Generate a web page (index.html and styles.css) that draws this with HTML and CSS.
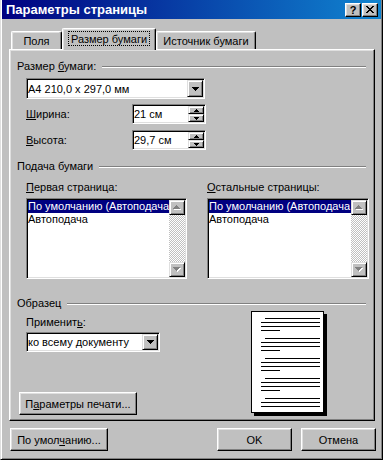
FILE: index.html
```html
<!DOCTYPE html>
<html lang="ru">
<head>
    <meta charset="UTF-8">
    <title>Параметры страницы</title>
    <link rel="stylesheet" href="styles.css">
</head>
<body>
    <div class="window">
        <div class="titlebar">
            <span class="title">Параметры страницы</span>
            <div class="caption-buttons">
                <span class="cap-btn">?</span>
                <span class="cap-btn">
                    <svg width="8" height="7" viewBox="0 0 8 7"><path d="M0 0h2v1H0zM6 0h2v1H6zM1 1h2v1H1zM5 1h2v1H5zM2 2h4v1H2zM3 3h2v1H3zM2 4h4v1H2zM1 5h2v1H1zM5 5h2v1H5zM0 6h2v1H0zM6 6h2v1H6z"/></svg>
                </span>
            </div>
        </div>

        <div class="client">
            <div class="tabs">
                <div class="tab tab-fields">Поля</div>
                <div class="tab tab-size active"><span class="focus">Размер бумаги</span></div>
                <div class="tab tab-source">Источник бумаги</div>
            </div>

            <div class="panel">
                <div class="group-title"><span>Размер <u>б</u>умаги:</span></div>
                <div class="combo combo-size">
                    <span class="combo-value">A4 210,0 x 297,0 мм</span>
                    <span class="drop-btn"><svg width="7" height="4" viewBox="0 0 7 4"><path d="M0 0h7v1H0zM1 1h5v1H1zM2 2h3v1H2zM3 3h1v1H3z"/></svg></span>
                </div>
                <div class="field-row first">
                    <span class="field-label"><u>Ш</u>ирина:</span>
                    <div class="spin">
                        <span class="spin-value">21 см</span>
                        <span class="spin-btns">
                            <span class="spin-btn"><svg width="5" height="3" viewBox="0 0 5 3"><path d="M2 0h1v1H2zM1 1h3v1H1zM0 2h5v1H0z"/></svg></span>
                            <span class="spin-btn"><svg width="5" height="3" viewBox="0 0 5 3"><path d="M0 0h5v1H0zM1 1h3v1H1zM2 2h1v1H2z"/></svg></span>
                        </span>
                    </div>
                </div>
                <div class="field-row">
                    <span class="field-label"><u>В</u>ысота:</span>
                    <div class="spin">
                        <span class="spin-value">29,7 см</span>
                        <span class="spin-btns">
                            <span class="spin-btn"><svg width="5" height="3" viewBox="0 0 5 3"><path d="M2 0h1v1H2zM1 1h3v1H1zM0 2h5v1H0z"/></svg></span>
                            <span class="spin-btn"><svg width="5" height="3" viewBox="0 0 5 3"><path d="M0 0h5v1H0zM1 1h3v1H1zM2 2h1v1H2z"/></svg></span>
                        </span>
                    </div>
                </div>

                <div class="group-title group-feed"><span>Подача бумаги</span></div>
                <div class="trays">
                    <div class="tray tray-first">
                        <span class="tray-label"><u>П</u>ервая страница:</span>
                        <div class="listbox">
                            <ul class="items">
                                <li class="selected">По умолчанию (Автоподача</li>
                                <li>Автоподача</li>
                            </ul>
                            <div class="scrollbar">
                                <span class="scroll-btn"><svg width="8" height="5" viewBox="0 0 8 5"><path fill="#fff" d="M4 1h1v1H4zM3 2h3v1H3zM2 3h5v1H2zM1 4h7v1H1z"/><path fill="#808080" d="M3 0h1v1H3zM2 1h3v1H2zM1 2h5v1H1zM0 3h7v1H0z"/></svg></span>
                                <span class="scroll-track"></span>
                                <span class="scroll-btn"><svg width="8" height="5" viewBox="0 0 8 5"><path fill="#fff" d="M1 1h7v1H1zM2 2h5v1H2zM3 3h3v1H3zM4 4h1v1H4z"/><path fill="#808080" d="M0 0h7v1H0zM1 1h5v1H1zM2 2h3v1H2zM3 3h1v1H3z"/></svg></span>
                            </div>
                        </div>
                    </div>
                    <div class="tray tray-rest">
                        <span class="tray-label"><u>О</u>стальные страницы:</span>
                        <div class="listbox">
                            <ul class="items">
                                <li class="selected">По умолчанию (Автоподача</li>
                                <li>Автоподача</li>
                            </ul>
                            <div class="scrollbar">
                                <span class="scroll-btn"><svg width="8" height="5" viewBox="0 0 8 5"><path fill="#fff" d="M4 1h1v1H4zM3 2h3v1H3zM2 3h5v1H2zM1 4h7v1H1z"/><path fill="#808080" d="M3 0h1v1H3zM2 1h3v1H2zM1 2h5v1H1zM0 3h7v1H0z"/></svg></span>
                                <span class="scroll-track"></span>
                                <span class="scroll-btn"><svg width="8" height="5" viewBox="0 0 8 5"><path fill="#fff" d="M1 1h7v1H1zM2 2h5v1H2zM3 3h3v1H3zM4 4h1v1H4z"/><path fill="#808080" d="M0 0h7v1H0zM1 1h5v1H1zM2 2h3v1H2zM3 3h1v1H3z"/></svg></span>
                            </div>
                        </div>
                    </div>
                </div>

                <div class="group-title group-sample"><span>Образец</span></div>
                <div class="sample">
                    <div class="sample-left">
                        <span class="apply-label">Применит<u>ь</u>:</span>
                        <div class="combo combo-apply">
                            <span class="combo-value">ко всему документу</span>
                            <span class="drop-btn"><svg width="7" height="4" viewBox="0 0 7 4"><path d="M0 0h7v1H0zM1 1h5v1H1zM2 2h3v1H2zM3 3h1v1H3z"/></svg></span>
                        </div>
                        <button class="btn btn-print">П<u>а</u>раметры печати...</button>
                    </div>
                    <div class="page-preview">
                        <div class="para"><i class="ln indent"></i><i class="ln"></i><i class="ln"></i><i class="ln short"></i></div>
                        <div class="para"><i class="ln indent"></i><i class="ln"></i><i class="ln"></i><i class="ln short"></i></div>
                        <div class="para"><i class="ln indent"></i><i class="ln"></i><i class="ln"></i><i class="ln short"></i></div>
                        <div class="para"><i class="ln indent"></i><i class="ln"></i><i class="ln"></i><i class="ln short"></i></div>
                        <div class="para"><i class="ln indent"></i><i class="ln"></i><i class="ln"></i></div>
                    </div>
                </div>
            </div>

            <div class="footer">
                <button class="btn btn-default">По умол<u>ч</u>анию...</button>
                <button class="btn btn-ok">OK</button>
                <button class="btn btn-cancel">Отмена</button>
            </div>
        </div>
    </div>
</body>
</html>
```

FILE: styles.css
```css
* {
    box-sizing: border-box;
    margin: 0;
    padding: 0;
}
body {
    background: #c0c0c0;
    font-family: "Liberation Sans", Arial, sans-serif;
    font-size: 11px;
    color: #000;
}
u {
    text-decoration: underline;
    text-underline-offset: 1px;
}

/* window frame */
.window {
    width: 383px;
    height: 460px;
    background: #c0c0c0;
    border: 1px solid;
    border-color: #dfdfdf #000 #000 #dfdfdf;
    border-top: 0;
    box-shadow: inset 1px 0 #fff, inset -1px -1px #808080;
    padding: 0 1px 1px 1px;
}
.titlebar {
    height: 19px;
    display: flex;
    align-items: center;
    justify-content: space-between;
    padding: 0 3px 0 4px;
    background: linear-gradient(to right, #000080, #1084d0);
    color: #fff;
    font-size: 13px;
    font-weight: bold;
}
.caption-buttons {
    display: flex;
    gap: 1px;
}
.cap-btn {
    width: 16px;
    height: 14px;
    display: flex;
    align-items: center;
    justify-content: center;
    background: #c0c0c0;
    color: #000;
    font-size: 11px;
    font-weight: bold;
    border: 1px solid;
    border-color: #fff #000 #000 #fff;
    box-shadow: inset -1px -1px #808080, inset 1px 1px #dfdfdf;
}

/* tabs */
.client {
    padding: 9px 6px 0 7px;
}
.tabs {
    display: flex;
    align-items: flex-start;
    height: 21px;
    padding-left: 2px;
    position: relative;
    z-index: 1;
}
.tab {
    height: 18px;
    margin-top: 3px;
    display: flex;
    align-items: center;
    justify-content: center;
    padding-top: 1px;
    background: #c0c0c0;
    border-top: 1px solid #fff;
    border-left: 1px solid #fff;
    border-right: 1px solid #000;
    border-top-left-radius: 2px;
    border-top-right-radius: 2px;
    box-shadow: inset -1px 0 #808080, inset 1px 1px #dfdfdf;
}
.tab-fields { width: 51px; }
.tab-size { width: 94px; }
.tab-source { width: 100px; }
.tab.active {
    height: 22px;
    margin-top: 0;
    padding-top: 0;
    padding-bottom: 2px;
}
.focus {
    padding: 2px 3px 1px 3px;
    outline: 1px dotted #000;
    outline-offset: -1px;
}

/* panel */
.panel {
    height: 372px;
    display: flex;
    flex-direction: column;
    border: 1px solid;
    border-color: #fff #000 #000 #fff;
    box-shadow: inset -1px -1px #808080, inset 1px 1px #dfdfdf;
    padding: 10px 5px 0 7px;
}
.group-title {
    display: flex;
    align-items: center;
    height: 13px;
    line-height: 13px;
    white-space: nowrap;
}
.group-title::after {
    content: "";
    flex: 1;
    margin: 0 3px 0 6px;
    border-top: 1px solid #808080;
    border-bottom: 1px solid #fff;
}
.group-feed { margin-top: 10px; }
.group-sample { margin-top: 18px; }

/* sunken fields */
.combo, .spin, .listbox {
    display: flex;
    background: #fff;
    border: 1px solid;
    border-color: #808080 #fff #fff #808080;
    box-shadow: inset 1px 1px #000, inset -1px -1px #dfdfdf;
    padding: 1px;
}
.combo-value, .spin-value {
    flex: 1;
    display: flex;
    align-items: center;
    white-space: nowrap;
    overflow: hidden;
}
.combo-size {
    width: 179px;
    height: 21px;
    margin: 5px 0 0 9px;
}
.combo-apply {
    width: 134px;
    height: 20px;
    margin-top: 3px;
}
.drop-btn, .spin-btn, .scroll-btn {
    display: flex;
    align-items: center;
    justify-content: center;
    background: #c0c0c0;
    border: 1px solid;
    border-color: #dfdfdf #000 #000 #dfdfdf;
    box-shadow: inset 1px 1px #fff, inset -1px -1px #808080;
}
.drop-btn {
    width: 16px;
}

.field-row {
    display: flex;
    align-items: center;
    height: 20px;
    margin: 6px 0 0 9px;
}
.field-row.first { margin-top: 5px; }
.field-label {
    width: 106px;
}
.spin {
    width: 74px;
    height: 20px;
}
.spin-btns {
    width: 16px;
    display: flex;
    flex-direction: column;
}
.spin-btn {
    flex: 1;
}

/* paper trays */
.trays {
    display: flex;
    gap: 20px;
    margin: 8px 0 0 9px;
}
.tray {
    display: flex;
    flex-direction: column;
}
.tray-first { width: 161px; }
.tray-rest { width: 162px; }
.tray-label {
    height: 13px;
    line-height: 13px;
}
.listbox {
    height: 81px;
    margin-top: 4px;
}
.items {
    flex: 1;
    list-style: none;
    overflow: hidden;
}
.items li {
    height: 13px;
    line-height: 13px;
    white-space: nowrap;
}
.items li.selected {
    background: #000080;
    color: #fff;
}
.scrollbar {
    width: 16px;
    display: flex;
    flex-direction: column;
}
.scroll-btn {
    height: 15px;
}
.scroll-track {
    flex: 1;
    background: repeating-conic-gradient(#c0c0c0 0 25%, #fff 0 50%) 0 0 / 2px 2px;
}

/* sample */
.sample {
    flex: 1;
    display: flex;
}
.sample-left {
    width: 234px;
    display: flex;
    flex-direction: column;
    align-items: flex-start;
}
.apply-label {
    height: 13px;
    line-height: 13px;
    margin: 6px 0 0 9px;
}
.combo-apply {
    margin-left: 9px;
}
.btn {
    height: 23px;
    background: #c0c0c0;
    font-family: inherit;
    font-size: 11px;
    color: #000;
    border: 1px solid;
    border-color: #fff #000 #000 #fff;
    box-shadow: inset -1px -1px #808080, inset 1px 1px #dfdfdf;
}
.btn-print {
    width: 118px;
    margin: auto 0 5px 2px;
}
.page-preview {
    width: 73px;
    height: 102px;
    margin-top: 1px;
    display: flex;
    flex-direction: column;
    gap: 7px;
    padding: 6px 3px 0 9px;
    background: #fff;
    border: 1px solid #000;
    box-shadow: 3px 3px 0 #000;
    overflow: hidden;
}
.para {
    display: flex;
    flex-direction: column;
    gap: 3px;
}
.ln {
    display: block;
    height: 1px;
    background: #000;
}
.ln.indent { margin-left: 4px; }
.ln.short { width: 19px; }

/* bottom buttons */
.footer {
    display: flex;
    margin-top: 7px;
    padding: 0 0 0 1px;
}
.btn-default { width: 98px; }
.btn-ok {
    width: 75px;
    margin-left: auto;
}
.btn-cancel {
    width: 75px;
    margin: 0 -1px 0 9px;
}
```
